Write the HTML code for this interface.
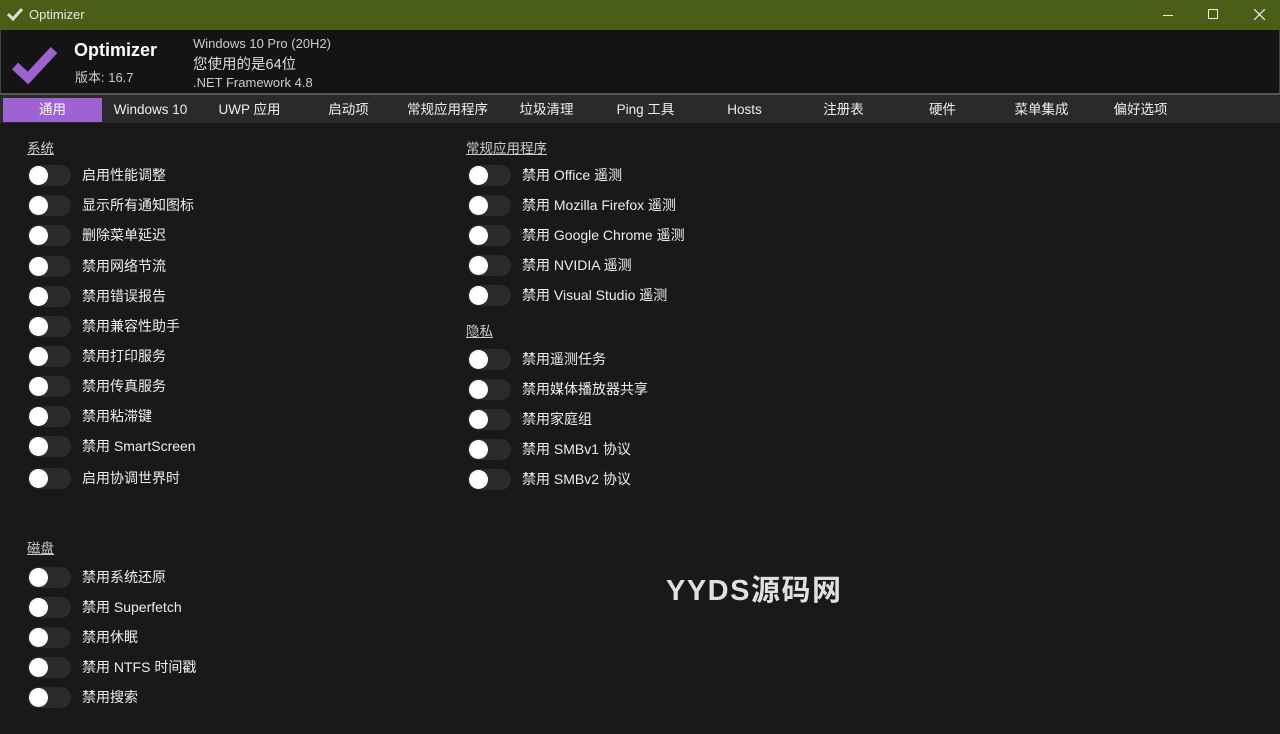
<!DOCTYPE html>
<html><head><meta charset="utf-8"><style>
*{margin:0;padding:0;box-sizing:border-box}
body{width:1280px;height:734px;background:#191919;font-family:"Liberation Sans","Noto Sans CJK SC",sans-serif;color:#eee;position:relative;overflow:hidden}
.tb{position:absolute;left:0;top:0;width:1280px;height:30px;background:#4b5e17;color:#e8e8e8;font-size:13px}
.hd{position:absolute;left:0;top:30px;width:1280px;height:63px;background:#141414;border-left:1px solid #444;border-right:1px solid #444}
.tabs{position:absolute;left:0;top:93px;width:1280px;height:30px;background:#2a2a2a;border-top:2px solid #555}
.tab{position:absolute;top:3px;width:99px;height:24px;line-height:24px;text-align:center;font-size:13.5px;color:#eee}
.tab.a{background:#9d63d1;color:#fff}
.h{position:absolute;font-size:13.5px;color:#ccc;text-decoration:underline}
.r{position:absolute;font-size:14px;height:20px;line-height:20px}
.r i{position:absolute;left:0;top:0;width:43px;height:21px;border-radius:11px;background:#2b2b2b}
.r i:after{content:"";position:absolute;left:1px;top:1px;width:19px;height:19px;border-radius:50%;background:#fff}
.r span{position:absolute;left:54px;white-space:nowrap}
</style></head><body>
<div class="tb">
<svg style="position:absolute;left:7px;top:7px" width="16" height="14"><path d="M1 7 L6 12 L15 2" stroke="#ddd" stroke-width="3" fill="none"/></svg>
<span style="position:absolute;left:29px;top:7px">Optimizer</span>
<div style="position:absolute;left:1163px;top:15px;width:10px;height:1px;background:#eee"></div>
<div style="position:absolute;left:1208px;top:9px;width:10px;height:10px;border:1px solid #eee"></div>
<svg style="position:absolute;left:1254px;top:9px" width="11" height="11"><path d="M0 0L11 11M11 0L0 11" stroke="#eee" stroke-width="1.2"/></svg>
</div>
<div class="hd">
<svg style="position:absolute;left:10px;top:14px" width="48" height="40"><path d="M4 22 L17 34 L43 6" stroke="#9c62d0" stroke-width="9" fill="none"/></svg>
<div style="position:absolute;left:73px;top:10px;font-size:18px;font-weight:bold;color:#fff">Optimizer</div>
<div style="position:absolute;left:74px;top:37px;font-size:13px;color:#ccc">版本: 16.7</div>
<div style="position:absolute;left:192px;top:6px;font-size:13px;color:#ccc">Windows 10 Pro (20H2)</div>
<div style="position:absolute;left:192px;top:23px;font-size:14.5px;color:#ddd">您使用的是64位</div>
<div style="position:absolute;left:192px;top:45px;font-size:13px;color:#ccc">.NET Framework 4.8</div>
</div>
<div class="tabs">
<div class="tab a" style="left:3px">通用</div><div class="tab" style="left:101px">Windows 10</div><div class="tab" style="left:200px">UWP 应用</div><div class="tab" style="left:299px">启动项</div><div class="tab" style="left:398px">常规应用程序</div><div class="tab" style="left:497px">垃圾清理</div><div class="tab" style="left:596px">Ping 工具</div><div class="tab" style="left:695px">Hosts</div><div class="tab" style="left:794px">注册表</div><div class="tab" style="left:893px">硬件</div><div class="tab" style="left:992px">菜单集成</div><div class="tab" style="left:1091px">偏好选项</div>
</div>
<div class="h" style="left:27px;top:137px">系统</div>
<div class="r" style="left:28px;top:165px"><i></i><span>启用性能调整</span></div>
<div class="r" style="left:28px;top:195px"><i></i><span>显示所有通知图标</span></div>
<div class="r" style="left:28px;top:225px"><i></i><span>删除菜单延迟</span></div>
<div class="r" style="left:28px;top:256px"><i></i><span>禁用网络节流</span></div>
<div class="r" style="left:28px;top:286px"><i></i><span>禁用错误报告</span></div>
<div class="r" style="left:28px;top:316px"><i></i><span>禁用兼容性助手</span></div>
<div class="r" style="left:28px;top:346px"><i></i><span>禁用打印服务</span></div>
<div class="r" style="left:28px;top:376px"><i></i><span>禁用传真服务</span></div>
<div class="r" style="left:28px;top:406px"><i></i><span>禁用粘滞键</span></div>
<div class="r" style="left:28px;top:436px"><i></i><span>禁用 SmartScreen</span></div>
<div class="r" style="left:28px;top:468px"><i></i><span>启用协调世界时</span></div>
<div class="h" style="left:27px;top:537px">磁盘</div>
<div class="r" style="left:28px;top:567px"><i></i><span>禁用系统还原</span></div>
<div class="r" style="left:28px;top:597px"><i></i><span>禁用 Superfetch</span></div>
<div class="r" style="left:28px;top:627px"><i></i><span>禁用休眠</span></div>
<div class="r" style="left:28px;top:657px"><i></i><span>禁用 NTFS 时间戳</span></div>
<div class="r" style="left:28px;top:687px"><i></i><span>禁用搜索</span></div>
<div class="h" style="left:466px;top:137px">常规应用程序</div>
<div class="r" style="left:468px;top:165px"><i></i><span>禁用 Office 遥测</span></div>
<div class="r" style="left:468px;top:195px"><i></i><span>禁用 Mozilla Firefox 遥测</span></div>
<div class="r" style="left:468px;top:225px"><i></i><span>禁用 Google Chrome 遥测</span></div>
<div class="r" style="left:468px;top:255px"><i></i><span>禁用 NVIDIA 遥测</span></div>
<div class="r" style="left:468px;top:285px"><i></i><span>禁用 Visual Studio 遥测</span></div>
<div class="h" style="left:466px;top:320px">隐私</div>
<div class="r" style="left:468px;top:349px"><i></i><span>禁用遥测任务</span></div>
<div class="r" style="left:468px;top:379px"><i></i><span>禁用媒体播放器共享</span></div>
<div class="r" style="left:468px;top:409px"><i></i><span>禁用家庭组</span></div>
<div class="r" style="left:468px;top:439px"><i></i><span>禁用 SMBv1 协议</span></div>
<div class="r" style="left:468px;top:469px"><i></i><span>禁用 SMBv2 协议</span></div>
<div style="position:absolute;left:666px;top:567px;font-size:29px;font-weight:bold;color:#e0e0e0;letter-spacing:1.5px">YYDS源码网</div>
</body></html>
